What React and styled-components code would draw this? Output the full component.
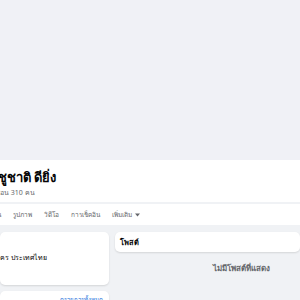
import React from "react";
import styled, { createGlobalStyle } from "styled-components";

const Global = createGlobalStyle`
  html, body { margin: 0; padding: 0; background: #f0f2f5; }
  body { font-family: "Noto Sans", "Liberation Sans", sans-serif; overflow: hidden; width: 300px; height: 300px; }
`;

const Page = styled.div`
  width: 300px;
  height: 300px;
  overflow: hidden;
  background: #f0f2f5;
  display: flex;
  flex-direction: column;
`;

const Cover = styled.div`
  height: 160px;
  flex-shrink: 0;
  background: #f0f1f6;
`;

const Header = styled.div`
  background: #fff;
  flex-shrink: 0;
`;

const Identity = styled.div`
  height: 44px;
  margin-left: -2px;
  padding-top: 8px;
  box-sizing: border-box;
  display: flex;
  flex-direction: column;
  gap: 1px;
  border-bottom: 2px solid #f0f2f5;
`;

const Name = styled.div`
  font-size: 13px;
  font-weight: 700;
  color: #050505;
  line-height: 19px;
  white-space: nowrap;
`;

const Friends = styled.div`
  font-size: 7px;
  color: #65676b;
  line-height: 10px;
  margin-left: -5px;
  white-space: nowrap;
`;

const Tabs = styled.div`
  height: 21px;
  display: flex;
  align-items: center;
  gap: 12px;
  margin-left: -13px;
`;

const Tab = styled.span`
  font-size: 6.5px;
  font-weight: 500;
  color: #65676b;
  white-space: nowrap;
  display: inline-flex;
  align-items: center;
  gap: 3px;
`;

const Body = styled.div`
  display: grid;
  grid-template-columns: 109px 1fr;
  align-items: start;
  gap: 6px;
  padding-top: 7px;
  flex-shrink: 0;
`;

const Column = styled.div`
  display: flex;
  flex-direction: column;
  gap: 6px;
`;

const Card = styled.div`
  background: #fff;
  border-radius: 5px;
  box-shadow: 0 1px 2px rgba(0, 0, 0, 0.12);
  height: ${(p) => p.$h}px;
  flex-shrink: 0;
  box-sizing: border-box;
  padding: ${(p) => p.$pad || "0 5px"};
  display: flex;
  align-items: ${(p) => p.$align || "center"};
  justify-content: ${(p) => p.$justify || "flex-start"};
  overflow: hidden;
`;

const Small = styled.span`
  font-size: 7px;
  color: #050505;
  white-space: nowrap;
  flex-shrink: 0;
`;

const Link = styled.span`
  font-size: 6px;
  line-height: 10px;
  color: #216fdb;
  white-space: nowrap;
`;

const PostTitle = styled.span`
  font-size: 7.5px;
  font-weight: 700;
  color: #050505;
`;

const Empty = styled.div`
  text-align: center;
  font-size: 8px;
  font-weight: 600;
  color: #65676b;
  padding-top: 4px;
  padding-left: 68px;
`;

export default function App() {
  return (
    <Page>
      <Global />
      <Cover />
      <Header>
        <Identity>
          <Name>ชูชาติ ดียิ่ง</Name>
          <Friends>เพื่อน 310 คน</Friends>
        </Identity>
        <Tabs>
          <Tab>เพื่อน</Tab>
          <Tab>รูปภาพ</Tab>
          <Tab>วิดีโอ</Tab>
          <Tab>การเช็คอิน</Tab>
          <Tab>
            เพิ่มเติม
            <svg width="5" height="4" viewBox="0 0 10 6">
              <path d="M0 0 L10 0 L5 6 Z" fill="#65676b" />
            </svg>
          </Tab>
        </Tabs>
      </Header>
      <Body>
        <Column>
          <Card $h={53} $pad="20px 62px 0 0" $align="flex-start" $justify="flex-end">
            <Small>กรุงเทพมหานคร ประเทศไทย</Small>
          </Card>
          <Card $h={40} $pad="4px 6px 0 0" $align="flex-start" $justify="flex-end">
            <Link>ดูรายการทั้งหมด</Link>
          </Card>
        </Column>
        <Column>
          <Card $h={20}>
            <PostTitle>โพสต์</PostTitle>
          </Card>
          <Empty>ไม่มีโพสต์ที่แสดง</Empty>
        </Column>
      </Body>
    </Page>
  );
}
